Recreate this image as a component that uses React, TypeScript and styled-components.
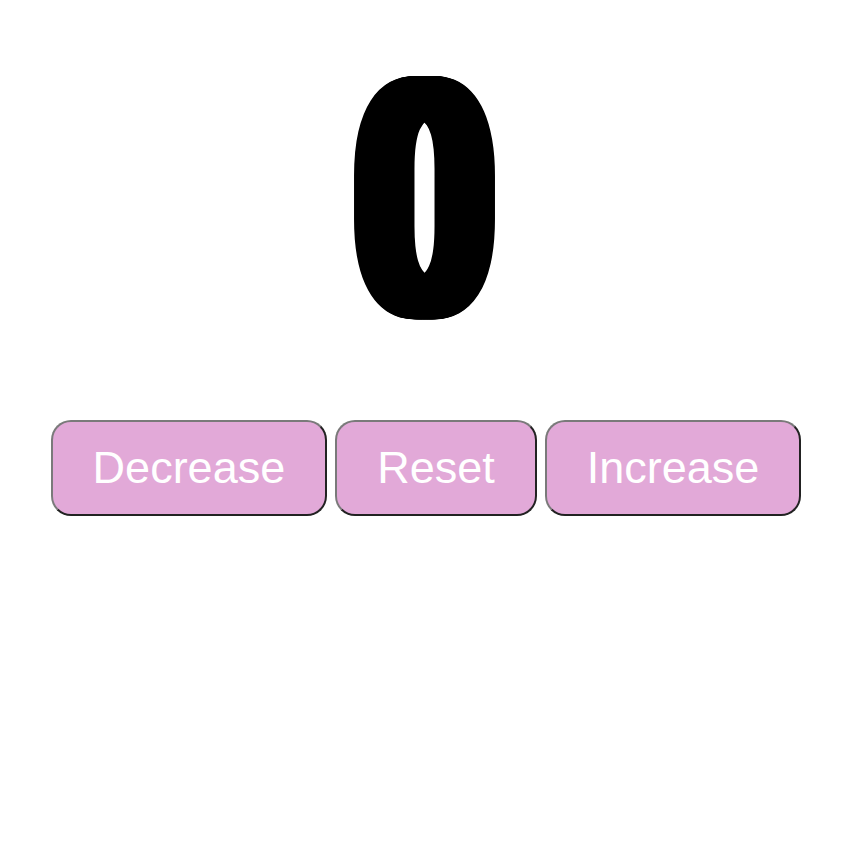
import {useState} from 'react';
import styled, {createGlobalStyle} from 'styled-components';

// horizontal smear so the digit gets heavy side strokes and a slit counter, like a condensed display face
const SMEAR = 14;
const smearShadow = Array.from({length: SMEAR * 2 + 1}, (_, i) => i - SMEAR)
  .filter(x => x !== 0)
  .map(x => `${x}px 0 0 #000`)
  .join(', ');

export default function App() {
  const [count, setCount] = useState<number>(0);

  return (
    <>
      <GlobalStyle />
      <Page>
        <Count>
          <Digit>{count}</Digit>
        </Count>
        <ButtonRow>
          <CounterButton onClick={() => setCount(c => c - 1)}>Decrease</CounterButton>
          <CounterButton onClick={() => setCount(0)}>Reset</CounterButton>
          <CounterButton onClick={() => setCount(c => c + 1)}>Increase</CounterButton>
        </ButtonRow>
      </Page>
    </>
  );
}

const GlobalStyle = createGlobalStyle`
  body {
    margin: 0;
    background: #fff;
    font-family: "Liberation Sans", Arial, sans-serif;
  }
`;

const Page = styled.div`
  display: flex;
  flex-direction: column;
  align-items: center;
  padding-top: 36px;
`;

const Count = styled.div`
  height: 333px;
  display: flex;
  justify-content: center;
  padding-left: 2px;
`;

const Digit = styled.span`
  display: inline-block;
  font-family: Roboto, "Liberation Sans", sans-serif;
  font-weight: 900;
  font-size: 333px;
  line-height: 1;
  color: #000;
  text-shadow: ${smearShadow};
  transform: scaleX(0.73);
`;

const ButtonRow = styled.div`
  display: flex;
  gap: 8px;
  margin-top: 51px;
  padding-left: 4px;
`;

const CounterButton = styled.button`
  font-family: "Liberation Sans", Arial, sans-serif;
  font-size: 45px;
  line-height: 52px;
  color: #fff;
  background: #e2a9d8;
  padding: 20px 40px;
  border-radius: 20px;
  border: 2px solid;
  border-color: #7a7a7a #222 #222 #7a7a7a;
  cursor: pointer;
`;
